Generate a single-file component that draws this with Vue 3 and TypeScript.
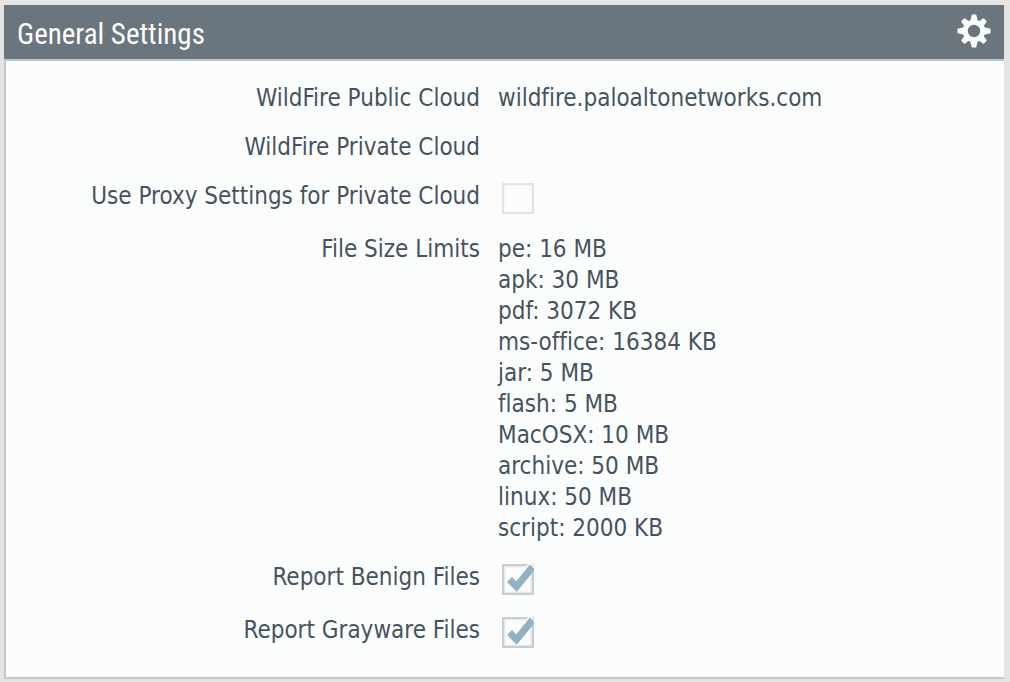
<script setup lang="ts">
import { reactive } from 'vue'

interface SizeLimit {
  type: string
  limit: string
}

const settings = reactive({
  publicCloud: 'wildfire.paloaltonetworks.com',
  privateCloud: '',
  useProxy: false,
  reportBenign: true,
  reportGrayware: true,
})

const limits: SizeLimit[] = [
  { type: 'pe', limit: '16 MB' },
  { type: 'apk', limit: '30 MB' },
  { type: 'pdf', limit: '3072 KB' },
  { type: 'ms-office', limit: '16384 KB' },
  { type: 'jar', limit: '5 MB' },
  { type: 'flash', limit: '5 MB' },
  { type: 'MacOSX', limit: '10 MB' },
  { type: 'archive', limit: '50 MB' },
  { type: 'linux', limit: '50 MB' },
  { type: 'script', limit: '2000 KB' },
]

const teeth: number[] = [0, 45, 90, 135, 180, 225, 270, 315]
</script>

<template>
  <section class="panel">
    <header class="bar">
      <h1 class="title">General Settings</h1>
      <button class="gear" type="button" aria-label="Edit general settings">
        <svg viewBox="0 0 34 34" width="34" height="34" aria-hidden="true">
          <circle cx="17" cy="17" r="8.7" fill="none" stroke="#fbfdfd" stroke-width="5" />
          <path
            v-for="angle in teeth"
            :key="angle"
            :d="angle % 90 === 0 ? 'M13 8 L14.8 0.5 H19.2 L21 8 Z' : 'M13.6 8 L14.4 2 Q14.6 1 15.6 1 H18.4 Q19.4 1 19.6 2 L20.4 8 Z'"
            :transform="`rotate(${angle} 17 17)`"
            fill="#fbfdfd"
          />
        </svg>
      </button>
    </header>

    <div class="body">
      <div class="row">
        <span class="label">WildFire Public Cloud</span>
        <span class="value">{{ settings.publicCloud }}</span>
      </div>
      <div class="row">
        <span class="label">WildFire Private Cloud</span>
        <span class="value">{{ settings.privateCloud }}</span>
      </div>
      <div class="row check-row">
        <label class="label" for="use-proxy">Use Proxy Settings for Private Cloud</label>
        <span class="check">
          <input id="use-proxy" v-model="settings.useProxy" class="box faint" type="checkbox" />
        </span>
      </div>
      <div class="row">
        <span class="label">File Size Limits</span>
        <ul class="limits">
          <li v-for="item in limits" :key="item.type">{{ item.type }}: {{ item.limit }}</li>
        </ul>
      </div>
      <div class="row check-row">
        <label class="label" for="report-benign">Report Benign Files</label>
        <span class="check">
          <input id="report-benign" v-model="settings.reportBenign" class="box" type="checkbox" />
          <svg v-if="settings.reportBenign" class="tick" viewBox="0 0 32 32" aria-hidden="true">
            <path class="halo" d="M27 6 L31 1" />
            <path d="M7.5 15.5 L14.5 22.5 L30.5 3" />
          </svg>
        </span>
      </div>
      <div class="row check-row">
        <label class="label" for="report-grayware">Report Grayware Files</label>
        <span class="check">
          <input id="report-grayware" v-model="settings.reportGrayware" class="box" type="checkbox" />
          <svg v-if="settings.reportGrayware" class="tick" viewBox="0 0 32 32" aria-hidden="true">
            <path class="halo" d="M27 6 L31 1" />
            <path d="M7.5 15.5 L14.5 22.5 L30.5 3" />
          </svg>
        </span>
      </div>
    </div>
  </section>
</template>

<style>
body {
  margin: 0;
  background: #e4e4e4;
}
</style>

<style scoped>
.panel {
  margin: 5px 6px 3px 4px;
  color: #46535f;
  font-family: "DejaVu Sans Condensed", "Noto Sans", sans-serif;
  font-size: 24px;
  font-variant-ligatures: none;
  line-height: 31px;
}

.bar {
  display: flex;
  align-items: center;
  justify-content: space-between;
  box-sizing: border-box;
  height: 56px;
  padding: 0 13px;
  background: #6b757e;
  border-bottom: 2px solid #bdc4cb;
}

.title {
  margin: 0;
  padding-top: 4px;
  color: #ffffff;
  font-family: "Roboto Condensed", "Liberation Sans Narrow", sans-serif;
  font-size: 29px;
  font-weight: 400;
  line-height: 40px;
}

.gear {
  display: flex;
  margin-bottom: 2px;
  padding: 0;
  border: 0;
  background: none;
  cursor: pointer;
}

.body {
  display: grid;
  gap: 18px;
  padding: 22px 0 27px;
  background: #fbfdfd;
  border-left: 2px solid #c3c8cd;
  border-bottom: 2px solid #c3c8cd;
}

.row {
  display: grid;
  grid-template-columns: 474px 1fr;
  column-gap: 18px;
}

.check-row {
  min-height: 35px;
}

.label {
  text-align: right;
}

.limits {
  margin: 0;
  padding: 0;
  list-style: none;
}

.check {
  position: relative;
  width: 32px;
  height: 32px;
  margin: 2px 0 0 4px;
}

.box {
  display: block;
  box-sizing: border-box;
  width: 32px;
  height: 31px;
  margin: 0;
  appearance: none;
  background: #fcfcfd;
  border: 2px solid #c7cdd2;
  box-shadow: inset 0 0 2px 1px #dfe2e6;
}

.faint {
  border-color: #e3e3e7;
  box-shadow: inset 0 0 1px 1px #f5f5f7;
}

.tick {
  position: absolute;
  inset: 0;
  width: 32px;
  height: 32px;
  pointer-events: none;
}

.tick path {
  fill: none;
  stroke: #92b2c4;
  stroke-width: 7;
}

.tick .halo {
  stroke: #f0f4f7;
  stroke-width: 9;
}
</style>
